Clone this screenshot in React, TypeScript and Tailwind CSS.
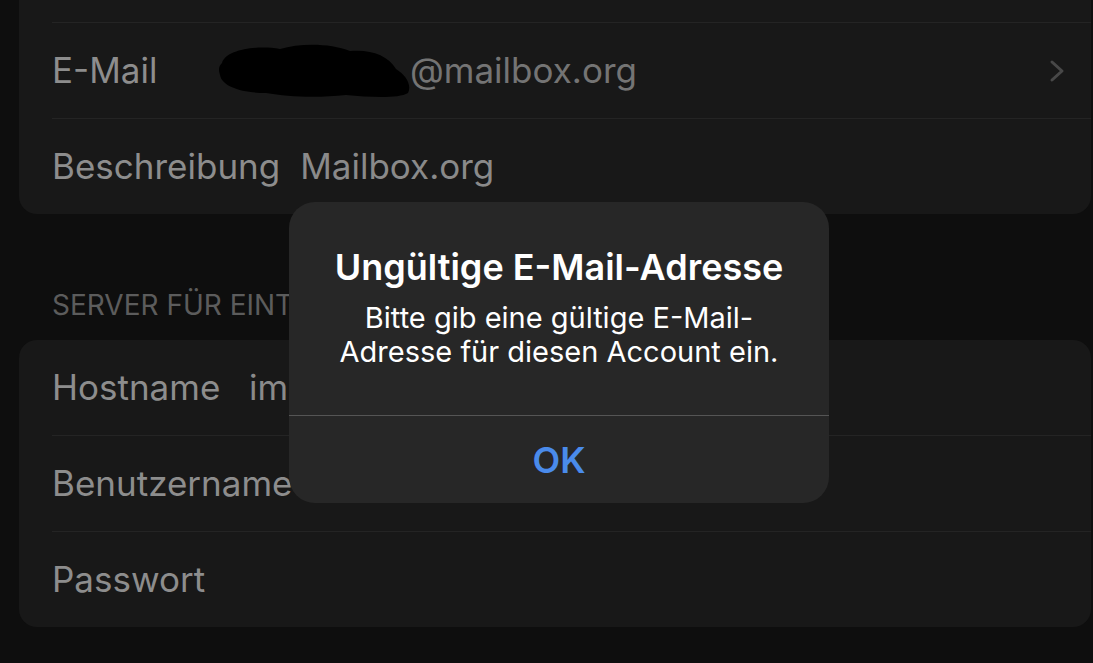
import React from 'react';

const font = { fontFamily: 'Inter, "Liberation Sans", sans-serif' };

const Sep = () => <div className="h-px ml-[33px] bg-[#242424]" />;

const Row = ({ label, children }: { label: string; children?: React.ReactNode }) => (
  <div className="h-[95px] flex items-center pl-[33px] pr-[27px]">
    <span className="min-w-[177px] mr-5 text-[35px] text-[#8d8d8d] whitespace-nowrap">{label}</span>
    {children}
  </div>
);

const Scribble = () => (
  <svg width="194" height="56" viewBox="0 0 194 56" className="shrink-0 -ml-[31px]">
    <path
      d="M4 20 C 8 6, 40 2, 62 6 C 82 0, 112 0, 132 8 C 152 6, 170 12, 178 26 C 188 32, 194 42, 190 50 C 180 56, 150 54, 128 52 C 100 55, 70 54, 48 50 C 25 50, 4 44, 2 32 C 0 26, 1 23, 4 20 Z"
      fill="#000"
    />
  </svg>
);

const Chevron = () => (
  <svg width="18" height="24" viewBox="0 0 18 24" className="ml-auto -mr-[2px]">
    <path d="M4 3 L14 12 L4 21" fill="none" stroke="#484848" strokeWidth="3" strokeLinecap="round" strokeLinejoin="round" />
  </svg>
);

export default function App() {
  return (
    <div className="relative h-[663px] w-full overflow-hidden bg-[#0e0e0e] pl-[19px] pr-[2px]" style={font}>
      <div className="-mt-[73px] rounded-[18px] bg-[#181818]">
        <Row label="" />
        <Sep />
        <Row label="E-Mail">
          <Scribble />
          <span className="-ml-[2px] text-[35px] text-[#747474] whitespace-nowrap">@mailbox.org</span>
          <Chevron />
        </Row>
        <Sep />
        <Row label="Beschreibung">
          <span className="text-[35px] text-[#8a8a8a] whitespace-nowrap">Mailbox.org</span>
        </Row>
      </div>

      <div className="mt-[76px] mb-5 pl-[33px] h-[30px] leading-[30px] text-[28px] text-[#5c5c5c] uppercase whitespace-nowrap">
        Server für eintreffende E-Mails
      </div>

      <div className="rounded-[18px] bg-[#181818]">
        <Row label="Hostname">
          <span className="text-[35px] text-[#8a8a8a] whitespace-nowrap">imap.mailbox.org</span>
        </Row>
        <Sep />
        <Row label="Benutzername" />
        <Sep />
        <Row label="Passwort" />
      </div>

      <div className="absolute left-[289px] top-[202px] w-[540px] h-[301px] rounded-[26px] bg-[#272727] flex flex-col">
        <div className="h-[213px] flex flex-col items-center pt-[45px] text-white text-center">
          <div className="text-[36px] leading-[40px] font-semibold whitespace-nowrap">Ungültige E-Mail-Adresse</div>
          <div className="mt-[14px] text-[29px] leading-[34px] whitespace-nowrap">
            Bitte gib eine gültige E-Mail-
            <br />
            Adresse für diesen Account ein.
          </div>
        </div>
        <div className="h-px bg-[#555555]" />
        <div className="flex-1 flex items-center justify-center text-[36px] font-semibold text-[#4a8beb]">OK</div>
      </div>
    </div>
  );
}
